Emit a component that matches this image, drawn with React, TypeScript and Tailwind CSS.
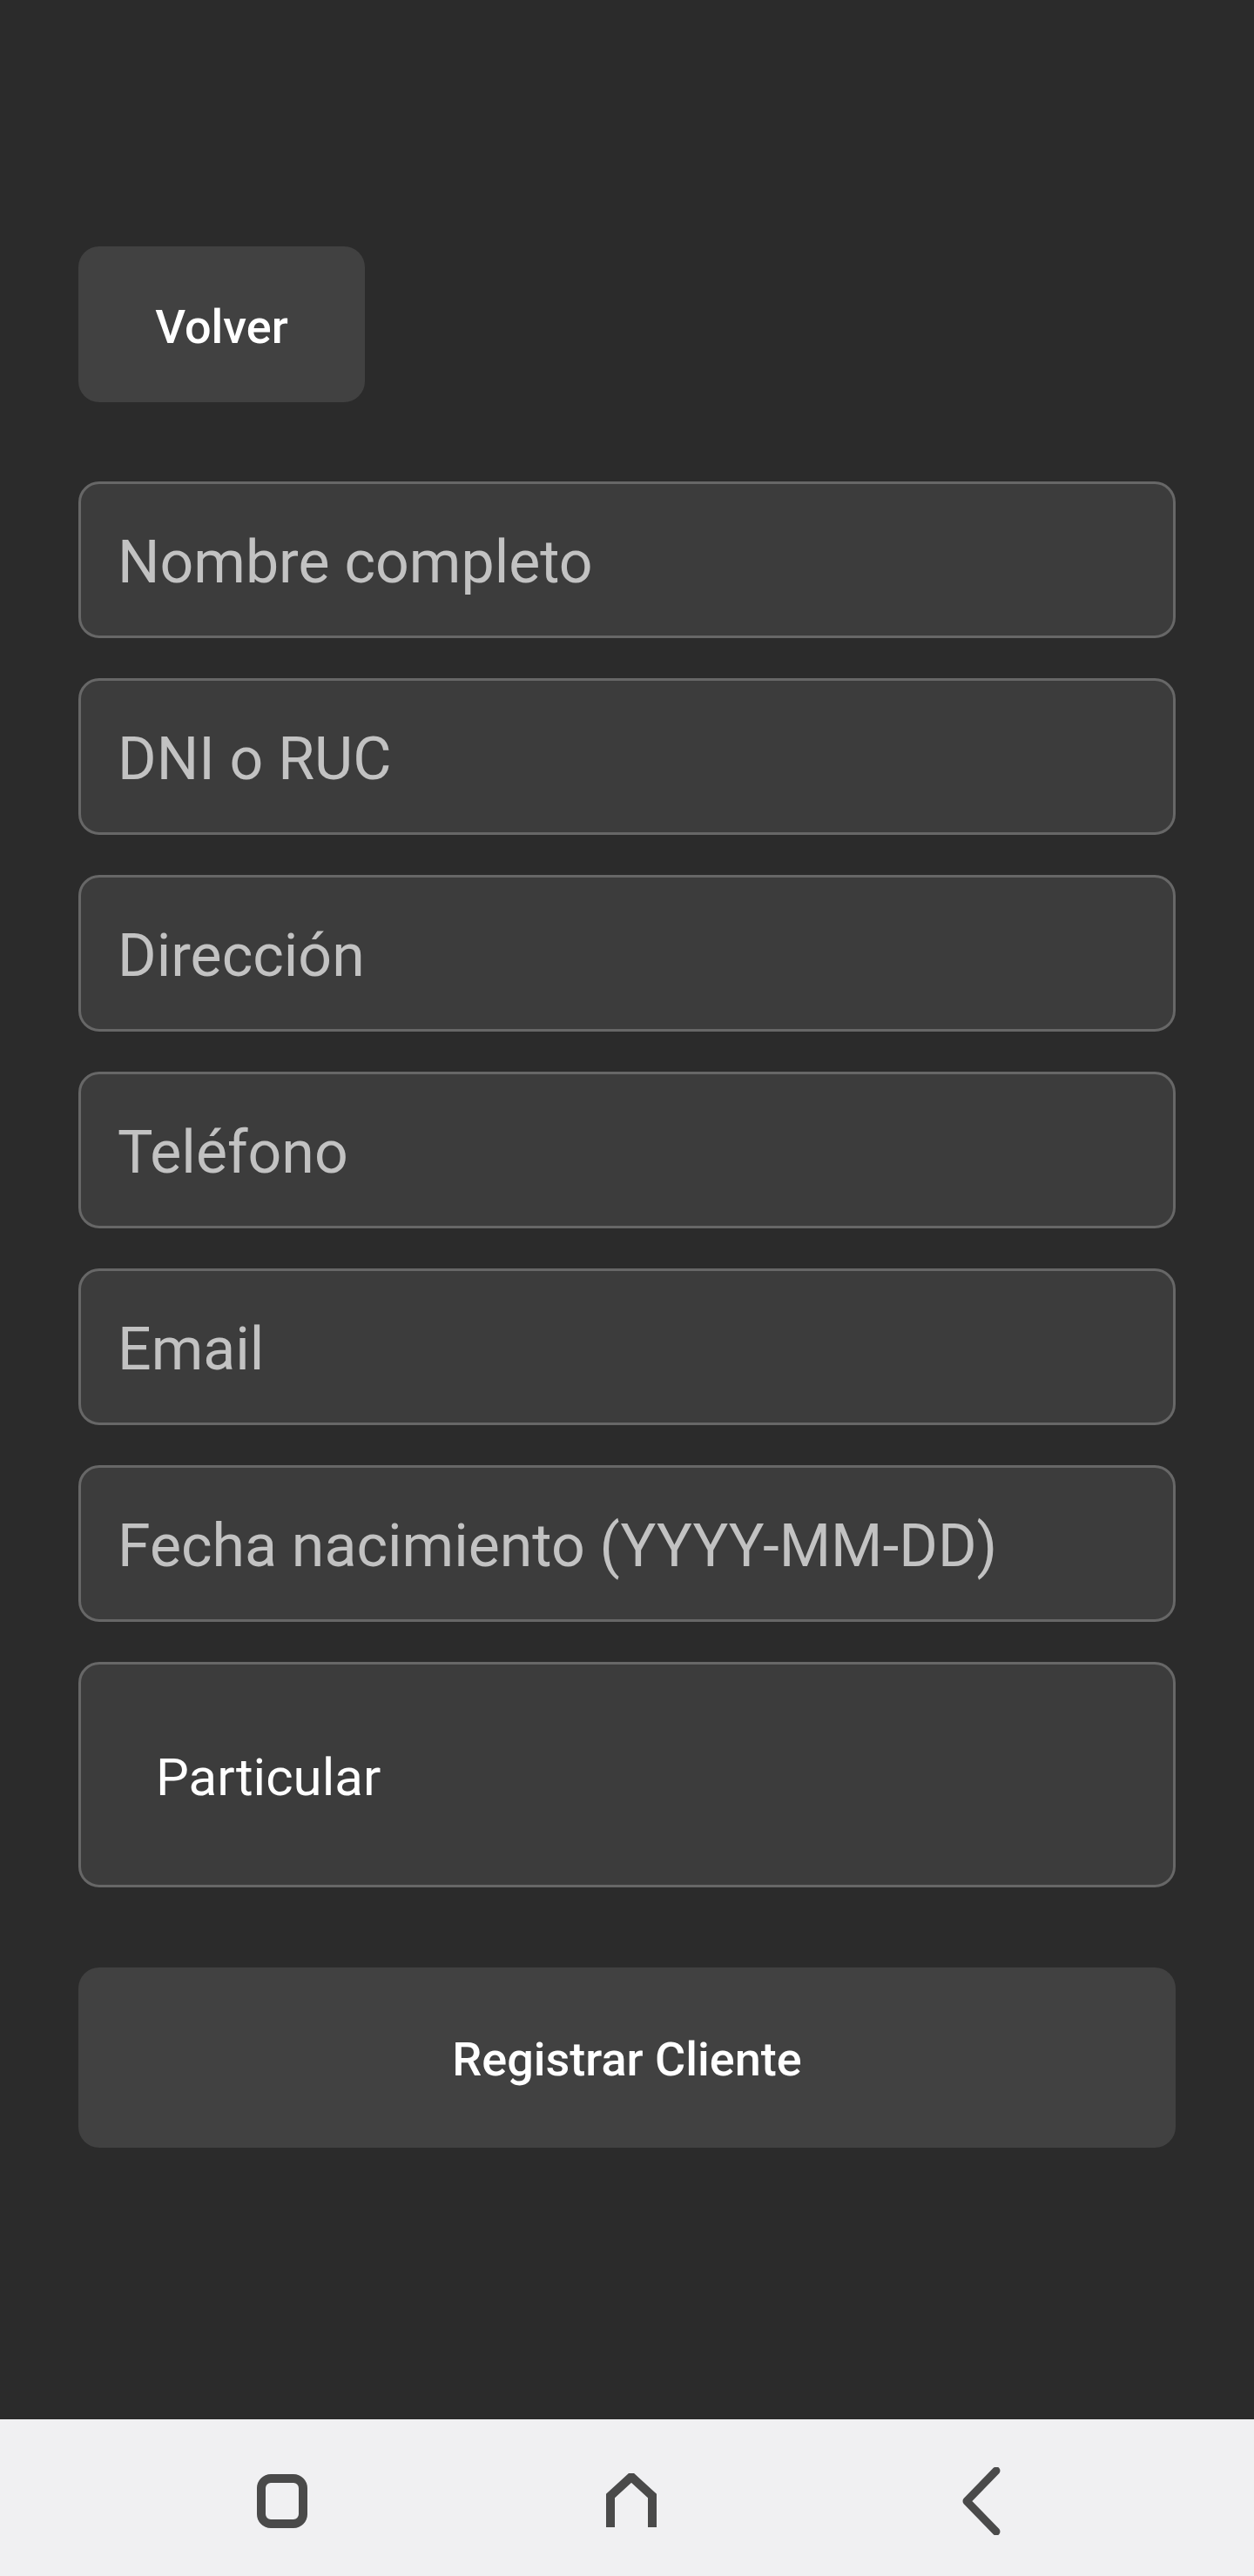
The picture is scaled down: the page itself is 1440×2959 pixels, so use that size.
import { useState } from 'react'

const FIELDS = [
  'Nombre completo',
  'DNI o RUC',
  'Dirección',
  'Teléfono',
  'Email',
  'Fecha nacimiento (YYYY-MM-DD)',
]

function NavBar() {
  return (
    <div className="h-[180px] bg-[#f0f0f2] flex items-center justify-center gap-[281px] pl-[10px] pt-[8px]">
      <div className="w-[120px] flex justify-center">
        <svg width="60" height="64" viewBox="0 0 60 64" fill="none">
          <rect x="6" y="6" width="48" height="52" rx="11" stroke="#4a4a4a" strokeWidth="10" />
        </svg>
      </div>
      <div className="w-[120px] flex justify-center">
        <svg width="64" height="64" viewBox="0 0 64 64" fill="none">
          <path d="M8 62 V26 L32 4 L56 26 V62" stroke="#4a4a4a" strokeWidth="10" strokeLinejoin="miter" />
        </svg>
      </div>
      <div className="w-[120px] flex justify-center">
        <svg width="48" height="78" viewBox="0 0 48 78" fill="none">
          <path d="M42 4 L8 39 L42 74" stroke="#4a4a4a" strokeWidth="9" strokeLinecap="round" strokeLinejoin="round" />
        </svg>
      </div>
    </div>
  )
}

export default function App() {
  const [values, setValues] = useState<string[]>(FIELDS.map(() => ''))

  return (
    <div className="h-[2959px] flex flex-col bg-[#2b2b2b] font-['Roboto',sans-serif]">
      <main className="flex-1 px-[90px] pt-[283px]">
        <button className="w-[329px] h-[179px] rounded-[24px] bg-[#414141] pt-[6px] text-white text-[54px] font-medium">
          Volver
        </button>

        <div className="mt-[91px] flex flex-col gap-[46px]">
          {FIELDS.map((f, i) => (
            <input
              key={f}
              type="text"
              placeholder={f}
              value={values[i]}
              onChange={(e) => {
                const next = [...values]
                next[i] = e.target.value
                setValues(next)
              }}
              className="h-[180px] w-full rounded-[24px] border-[3px] border-[#676767] bg-[#3c3c3c] pl-[42px] pr-[44px] pt-[6px] text-[68px] text-white placeholder-[#c2c2c2] outline-none"
            />
          ))}
          <div className="h-[259px] rounded-[24px] border-[3px] border-[#676767] bg-[#3c3c3c] pl-[86px] pt-[7px] flex items-center text-[60px] text-white">
            Particular
          </div>
        </div>

        <button className="mt-[92px] w-full h-[207px] rounded-[24px] bg-[#414141] pt-[4px] text-white text-[54px] font-medium">
          Registrar Cliente
        </button>
      </main>
      <NavBar />
    </div>
  )
}
